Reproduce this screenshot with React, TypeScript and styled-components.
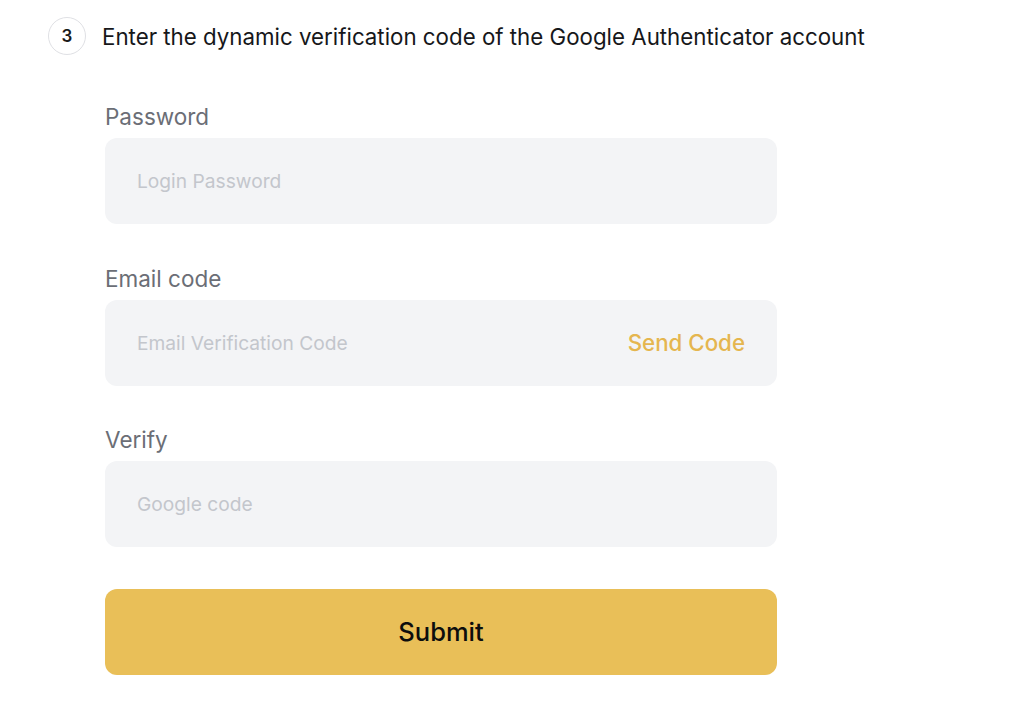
import React from "react";
import styled, { createGlobalStyle } from "styled-components";

const GlobalStyle = createGlobalStyle`
  body {
    margin: 0;
    background: #ffffff;
    font-family: Inter, "Liberation Sans", sans-serif;
  }
`;

const fields = [
  { label: "Password", placeholder: "Login Password" },
  { label: "Email code", placeholder: "Email Verification Code", action: "Send Code" },
  { label: "Verify", placeholder: "Google code" },
];

const App: React.FC = () => {
  return (
    <Page>
      <GlobalStyle />
      <StepRow>
        <StepBadge>3</StepBadge>
        <StepTitle>Enter the dynamic verification code of the Google Authenticator account</StepTitle>
      </StepRow>
      <Form>
        {fields.map((f) => (
          <Field key={f.label}>
            <Label>{f.label}</Label>
            <InputBox>
              <Input placeholder={f.placeholder} />
              {f.action && <SendCode>{f.action}</SendCode>}
            </InputBox>
          </Field>
        ))}
        <SubmitButton>Submit</SubmitButton>
      </Form>
    </Page>
  );
};

export default App;

const Page = styled.div`
  width: 1024px;
  height: 704px;
  padding: 17px 0 0 48px;
  box-sizing: border-box;
`;
const StepRow = styled.div`
  display: flex;
  align-items: center;
  gap: 16px;
`;
const StepBadge = styled.div`
  width: 36px;
  height: 36px;
  border: 1px solid #dfe0e4;
  border-radius: 50%;
  display: flex;
  align-items: center;
  justify-content: center;
  font-size: 17px;
  font-weight: 600;
  color: #1a1a1a;
`;
const StepTitle = styled.div`
  font-size: 22.3px;
  color: #16171a;
`;
const Form = styled.div`
  width: 672px;
  margin: 49px 0 0 57px;
  display: flex;
  flex-direction: column;
`;
const Field = styled.div`
  display: flex;
  flex-direction: column;
  gap: 8px;
  margin-bottom: 41.5px;
`;
const Label = styled.div`
  font-size: 22.5px;
  line-height: 26px;
  color: #6b6e76;
`;
const InputBox = styled.div`
  height: 86px;
  border-radius: 12px;
  background: #f3f4f6;
  display: flex;
  align-items: center;
  padding: 0 32px;
  box-sizing: border-box;
`;
const Input = styled.input`
  flex: 1;
  border: none;
  outline: none;
  background: transparent;
  font-family: inherit;
  font-size: 19.2px;
  color: #333;
  padding: 0;
  &::placeholder {
    color: #c3c6cc;
  }
`;
const SendCode = styled.span`
  font-size: 22.3px;
  font-weight: 500;
  color: #e5b64f;
`;
const SubmitButton = styled.button`
  height: 86px;
  border: none;
  border-radius: 12px;
  background: #e9bf58;
  font-family: Inter, "Liberation Sans", sans-serif;
  font-size: 25.5px;
  font-weight: 500;
  color: #0d0d0d;
  cursor: pointer;
  margin-top: 0;
`;
